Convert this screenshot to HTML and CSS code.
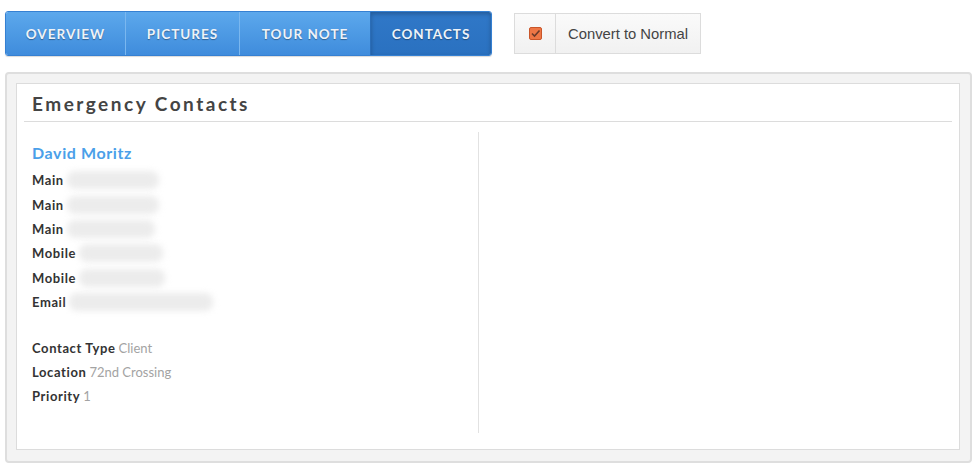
FILE: index.html
```html
<!DOCTYPE html>
<html lang="en">
<head>
    <meta charset="UTF-8">
    <title>Emergency Contacts</title>
    <link rel="stylesheet" href="styles.css">
</head>
<body>
    <!-- Top toolbar -->
    <div class="toolbar">
        <div class="tabs">
            <a class="tab tab-overview">Overview</a>
            <a class="tab tab-pictures">Pictures</a>
            <a class="tab tab-note">Tour Note</a>
            <a class="tab tab-contacts active">Contacts</a>
        </div>

        <div class="convert-btn">
            <span class="convert-icon">
                <svg width="13" height="13" viewBox="0 0 13 13">
                    <rect x="0.5" y="0.5" width="12" height="12" rx="1.5" fill="#ee7645" stroke="#c9562a"/>
                    <path d="M3 6.5 L5.5 9 L10.5 3.5" fill="none" stroke="#6b3a2a" stroke-width="1.6"/>
                </svg>
            </span>
            <span class="convert-text">Convert to Normal</span>
        </div>
    </div>

    <!-- Contacts panel -->
    <div class="panel">
        <div class="panel-inner">
            <h2 class="panel-title">Emergency Contacts</h2>

            <div class="columns">
                <div class="contact">
                    <div class="contact-name">David Moritz</div>
                    <div class="row"><span class="label">Main</span><span class="blur w92"></span></div>
                    <div class="row"><span class="label">Main</span><span class="blur w92"></span></div>
                    <div class="row"><span class="label">Main</span><span class="blur w88"></span></div>
                    <div class="row"><span class="label">Mobile</span><span class="blur w84"></span></div>
                    <div class="row"><span class="label">Mobile</span><span class="blur w86"></span></div>
                    <div class="row"><span class="label">Email</span><span class="blur w144"></span></div>

                    <div class="meta">
                        <div class="row"><span class="label">Contact Type</span><span class="value">Client</span></div>
                        <div class="row"><span class="label">Location</span><span class="value">72nd Crossing</span></div>
                        <div class="row"><span class="label">Priority</span><span class="value">1</span></div>
                    </div>
                </div>
                <div class="contact-empty"></div>
            </div>
        </div>
    </div>
</body>
</html>
```

FILE: styles.css
```css
/* General Reset */
* {
    margin: 0;
    padding: 0;
    box-sizing: border-box;
}

body {
    background: #fff;
    font-family: 'Lato', 'Open Sans', Arial, sans-serif;
    color: #333;
}

/* Toolbar */
.toolbar {
    display: flex;
    align-items: center;
    padding: 11px 0 0 5px;
}

.tabs {
    display: flex;
    height: 45px;
    border: 1px solid #3580d2;
    border-radius: 3px;
    overflow: hidden;
    box-shadow: 0 1px 1px rgba(0, 0, 0, 0.15);
}

.tab {
    display: flex;
    align-items: center;
    justify-content: center;
    font-size: 13.5px;
    font-weight: 700;
    letter-spacing: 1px;
    text-transform: uppercase;
    color: #eef3f9;
    text-shadow: 0 1px 1px rgba(0, 0, 0, 0.35);
    background: linear-gradient(to bottom, #5ca8ec, #3f8cdc);
    border-left: 1px solid #7ab7ef;
    cursor: pointer;
}

.tab:first-child {
    border-left: none;
}

.tab-overview { width: 119px; }
.tab-pictures { width: 114px; }
.tab-note { width: 131px; }
.tab-contacts { width: 121px; }

.tab.active {
    background: linear-gradient(to bottom, #3078c8, #2a71c0);
    border-left: 1px solid #2a6db8;
    box-shadow: inset 0 2px 4px rgba(0, 0, 0, 0.25);
}

/* Convert button */
.convert-btn {
    display: flex;
    height: 41px;
    margin-left: 22px;
    border: 1px solid #dcdcdc;
    background: linear-gradient(to bottom, #fafafa, #f1f1f1);
    cursor: pointer;
}

.convert-icon {
    display: flex;
    align-items: center;
    justify-content: center;
    width: 41px;
    border-right: 1px solid #dcdcdc;
}

.convert-text {
    display: flex;
    align-items: center;
    padding: 0 12px 0 12px;
    font-family: 'Liberation Sans', Arial, sans-serif;
    font-size: 14.8px;
    color: #444;
}

/* Panel */
.panel {
    margin: 16px 6px 0 5px;
    height: 391px;
    padding: 9px 10px 11px 9px;
    background: #f3f3f3;
    border: 2px solid #dedede;
    border-radius: 4px;
}

.panel-inner {
    height: 100%;
    padding: 0 7px;
    background: #fff;
    border: 1px solid #dcdcdc;
}

.panel-title {
    height: 38px;
    padding: 8px 0 0 8px;
    font-size: 19px;
    font-weight: 700;
    letter-spacing: 2.5px;
    color: #444;
    border-bottom: 1px solid #dcdcdc;
}

.columns {
    display: flex;
    padding-top: 10px;
}

.contact {
    width: 455px;
    height: 301px;
    padding: 11px 0 0 8px;
    border-right: 1px solid #e2e2e2;
}

.contact-name {
    font-size: 16px;
    font-weight: 700;
    color: #4a9fe9;
    letter-spacing: 0.6px;
    margin-bottom: 6px;
}

.row {
    display: flex;
    align-items: center;
    height: 24.4px;
    font-size: 13px;
}

.label {
    font-weight: 700;
    color: #333;
    letter-spacing: 0.6px;
    margin-right: 3px;
}

.value {
    color: #a3a3a3;
}

/* blurred phone numbers and emails */
.blur {
    height: 18px;
    background: #ececec;
    border-radius: 8px;
    filter: blur(3px);
}

.w84 { width: 84px; }
.w86 { width: 86px; }
.w88 { width: 88px; }
.w92 { width: 92px; }
.w144 { width: 144px; }

.meta {
    margin-top: 21px;
}
```
